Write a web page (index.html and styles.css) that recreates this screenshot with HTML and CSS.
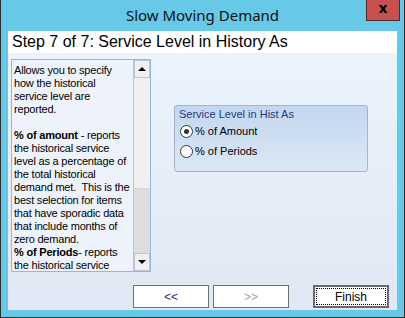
FILE: index.html
```html
<!DOCTYPE html>
<html>
<head>
<meta charset="utf-8">
<link rel="stylesheet" href="styles.css">
</head>
<body>
<div class="window">
  <div class="titlebar">
    <span class="title">Slow Moving Demand</span>
    <div class="close">x</div>
  </div>
  <div class="client">
    <div class="step">Step 7 of 7: Service Level in History As</div>
    <div class="content">
      <div class="main">
        <div class="helpbox">
          <div class="helptext">Allows you to specify<br>how the historical<br>service level are<br>reported.<br><br><b>% of amount</b> - reports<br>the historical service<br>level as a percentage of<br>the total historical<br>demand met.&nbsp; This is the<br>best selection for items<br>that have sporadic data<br>that include months of<br>zero demand.<br><b>% of Periods</b>- reports<br>the historical service</div>
          <div class="scrollbar">
            <div class="sb-btn"><span class="arrow-up"></span></div>
            <div class="sb-thumb"></div>
            <div class="sb-track"></div>
            <div class="sb-btn"><span class="arrow-down"></span></div>
          </div>
        </div>
        <div class="group">
          <div class="group-title">Service Level in Hist As</div>
          <div class="radio-row"><span class="radio checked"></span><span>% of Amount</span></div>
          <div class="radio-row"><span class="radio"></span><span>% of Periods</span></div>
        </div>
      </div>
      <div class="buttons">
        <div class="btn back">&lt;&lt;</div>
        <div class="btn next">&gt;&gt;</div>
        <div class="btn finish"><span class="focus">Finish</span></div>
      </div>
    </div>
  </div>
</div>
</body>
</html>
```
FILE: styles.css
```css
* { box-sizing: border-box; }
html, body { margin: 0; padding: 0; }
body { width: 405px; height: 318px; overflow: hidden; background: #fff; }

.window {
  width: 405px;
  height: 318px;
  background: #67c8e8;
  border-left: 1px solid #2e2e2e;
  border-right: 1px solid #2e2e2e;
  border-bottom: 1px solid #2e2e2e;
  padding: 0 6px 7px 7px;
  display: flex;
  flex-direction: column;
  font-family: "Liberation Sans", Arial, sans-serif;
}

.titlebar {
  height: 31px;
  margin: 0 -6px 0 -7px;
  position: relative;
  display: flex;
  align-items: center;
  justify-content: center;
}
.title {
  font-family: "Noto Sans", "Open Sans", sans-serif;
  font-size: 15px;
  color: #111;
  margin-top: -1px;
}
.close {
  position: absolute;
  top: 0;
  right: 4px;
  width: 34px;
  height: 21px;
  background: #c75050;
  border: 1px solid #4a3030;
  border-top: none;
  color: #000;
  font-family: "DejaVu Sans", sans-serif;
  font-weight: bold;
  font-size: 14px;
  line-height: 17px;
  text-align: center;
}

.client {
  width: 390px;
  height: 279px;
  display: flex;
  flex-direction: column;
  border-right: 1px solid #a7b3c4;
}
.step {
  height: 22px;
  background: #fff;
  font-size: 16px;
  line-height: 22px;
  padding-left: 4px;
  color: #000;
  white-space: nowrap;
}
.content {
  flex: 1;
  display: flex;
  flex-direction: column;
  background: linear-gradient(#ebf3fc, #e1e8f5);
  padding: 6px 8px 2px 3px;
}
.main {
  display: flex;
  align-items: flex-start;
}

.helpbox {
  width: 140px;
  height: 213px;
  border: 1px solid #9fb3d6;
  background: #eef3fb;
  display: flex;
}
.helptext {
  flex: 1;
  overflow: hidden;
  white-space: nowrap;
  font-size: 11px;
  line-height: 13px;
  letter-spacing: -0.2px;
  color: #000;
  padding: 4px 0 0 2px;
}
.helptext b { font-weight: bold; }

.scrollbar {
  width: 17px;
  display: flex;
  flex-direction: column;
  border-left: 1px solid #b7c6de;
}
.sb-btn {
  height: 18px;
  background: #f0f0f0;
  border: 1px solid #b8c6dc;
  display: flex;
  align-items: center;
  justify-content: center;
}
.sb-thumb {
  height: 111px;
  background: #f0f0f0;
  border-bottom: 1px solid #d6d6d6;
}
.sb-track {
  flex: 1;
  background: #dddddd;
}
.arrow-up {
  width: 0; height: 0;
  border-left: 4px solid transparent;
  border-right: 4px solid transparent;
  border-bottom: 4px solid #000;
}
.arrow-down {
  width: 0; height: 0;
  border-left: 4px solid transparent;
  border-right: 4px solid transparent;
  border-top: 4px solid #000;
}

.group {
  margin-left: 23px;
  margin-top: 46px;
  width: 194px;
  height: 67px;
  border: 1px solid #a5b4ca;
  border-radius: 3px;
  background: linear-gradient(#c3d7f0, #dbe7f5);
  padding: 2px 0 0 5px;
  font-size: 11px;
}
.group-title {
  color: #1d3b7c;
  height: 13px;
  line-height: 13px;
  margin-left: -1px;
}
.radio-row {
  display: flex;
  align-items: center;
  height: 20px;
  color: #000;
  gap: 2px;
}
.radio-row:first-of-type { margin-top: 0; }
.radio {
  width: 13px;
  height: 13px;
  border: 1px solid #333;
  border-radius: 50%;
  background: #fff;
  display: flex;
  align-items: center;
  justify-content: center;
}
.radio.checked::after {
  content: "";
  width: 5px;
  height: 5px;
  border-radius: 50%;
  background: #333;
}

.buttons {
  margin-top: auto;
  display: flex;
  justify-content: flex-end;
  gap: 4px;
}
.btn {
  width: 76px;
  height: 23px;
  background: #fff;
  border: 1px solid #707070;
  font-size: 12px;
  display: flex;
  align-items: center;
  justify-content: center;
}
.back { color: #1a3070; }
.next { color: #a0a0a0; }
.finish {
  margin-left: 20px;
  border: 2px solid #6a6a6a;
  padding: 1px;
  color: #000;
}
.focus {
  width: 100%;
  height: 100%;
  border: 1px dotted #000;
  display: flex;
  align-items: center;
  justify-content: center;
}
```
